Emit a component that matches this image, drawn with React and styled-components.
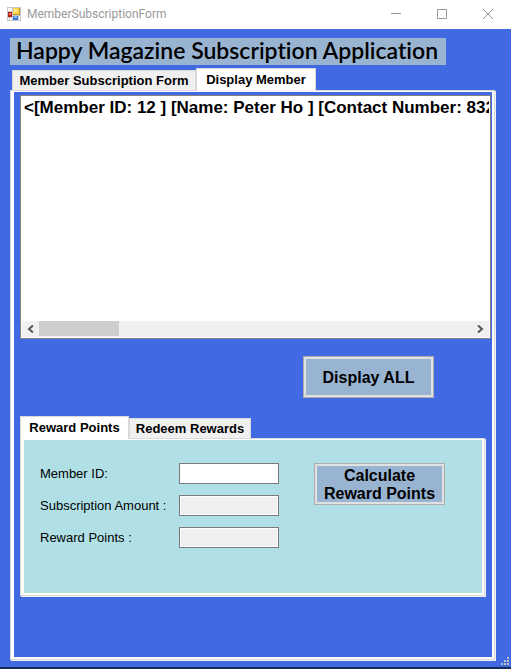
import React, { useState } from "react";
import styled, { createGlobalStyle } from "styled-components";

const GlobalStyle = createGlobalStyle`
  *, *::before, *::after { box-sizing: border-box; }
  body { margin: 0; background: #4169e1; color: #000; font-family: "Liberation Sans", Arial, sans-serif; }
  button, input { font: inherit; color: inherit; }
`;

const Window = styled.div`
  display: flex;
  flex-direction: column;
  min-height: 100vh;
  position: relative;
  background: #4169e1;
  border-bottom: 2px solid #132b55;
`;

const TitleBar = styled.header`
  display: flex;
  align-items: center;
  height: 29px;
  padding: 0 0 2px 7px;
  background: #fff;
`;

const WindowName = styled.span`
  flex: 1;
  padding-left: 6px;
  font: 12px/16px Roboto, sans-serif;
  color: #999;
  white-space: nowrap;
`;

const CaptionButton = styled.button`
  display: grid;
  place-items: center;
  width: 46px;
  height: 27px;
  padding: 0;
  border: 0;
  background: none;
`;

const Captions = styled.div`
  display: flex;
`;

const Client = styled.main`
  flex: 1;
  display: flex;
  flex-direction: column;
  align-items: flex-start;
  padding: 9px 15px 6px 10px;
`;

const Heading = styled.h1`
  margin: 0 0 3px;
  padding: 0 8px 2px 6px;
  background: #99b4d1;
  font: 600 23px/25px Lato, sans-serif;
  font-variant-ligatures: none;
  white-space: nowrap;
`;

const TabList = styled.div`
  display: flex;
  align-items: flex-end;
  padding-left: ${(p) => p.$indent}px;
`;

const Tab = styled.button`
  height: ${(p) => (p.$active ? 23 : 20)}px;
  margin-bottom: ${(p) => (p.$active ? -1 : 0)}px;
  width: ${(p) => p.$width}px;
  padding: 0;
  position: relative;
  border: 1px solid #d9d9d9;
  border-bottom: 0;
  background: ${(p) => (p.$active ? "#fff" : "#f0f0f0")};
  font: bold 13px/18px "Liberation Sans", Arial, sans-serif;
  white-space: nowrap;
`;

const Frame = styled.section`
  align-self: stretch;
  border: 1px solid #d9d9d9;
  background: #fff;
  box-shadow: 1px 1px 0 #f0f0f0;
  margin: 0 1px 1px 0;
  padding: 1px 2px 2px 3px;
  display: flex;
  flex: ${(p) => (p.$fill ? 1 : "none")};
`;

const MemberPage = styled.div`
  flex: 1;
  min-width: 0;
  display: flex;
  flex-direction: column;
  padding: 3px 1px 60px 6px;
  background: #4169e1;
`;

const ListBox = styled.div`
  height: 244px;
  display: flex;
  flex-direction: column;
  border: 1px solid #828282;
  padding: 1px;
  background: #fff;
`;

const MemberList = styled.ul`
  flex: 1;
  margin: 0;
  padding: 0 0 0 2px;
  list-style: none;
  overflow: hidden;
  font: bold 17px/22px "Liberation Sans", Arial, sans-serif;
  white-space: nowrap;
`;

const ScrollBar = styled.div`
  display: flex;
  align-items: stretch;
  height: 16px;
  background: #f0f0f0;
`;

const ScrollButton = styled.button`
  width: 17px;
  padding: 0;
  border: 0;
  background: none;
  display: grid;
  place-items: center;
`;

const Track = styled.div`
  flex: 1;
`;

const Thumb = styled.div`
  width: 80px;
  height: 15px;
  background: #cdcdcd;
`;

const ActionRow = styled.div`
  display: flex;
  justify-content: flex-end;
  padding: 17px 57px 18px 0;
`;

const ActionButton = styled.button`
  width: 131px;
  height: 42px;
  padding: 2px 0 0;
  border: 1px solid #adadad;
  box-shadow: inset 0 0 0 2px #e1e1e1;
  background: #99b4d1;
  font: bold 16px/18px "Liberation Sans", Arial, sans-serif;
`;

const Rewards = styled.div`
  margin-right: 5px;
`;

const RewardForm = styled.form`
  flex: 1;
  display: flex;
  justify-content: space-between;
  align-items: flex-start;
  height: 153px;
  padding: 23px 37px 0 16px;
  background: #b0e0e6;
`;

const Fields = styled.div`
  display: grid;
  grid-template-columns: 139px 100px;
  row-gap: 11px;
  align-items: center;
  font-size: 13px;
  line-height: 21px;
`;

const FieldLabel = styled.label`
  white-space: nowrap;
`;

const TextBox = styled.input`
  width: 100%;
  height: 21px;
  padding: 0 3px;
  border: 1px solid #7a7a7a;
  border-radius: 0;
  box-shadow: inset 0 0 0 1px #fff;
  background: ${(p) => (p.readOnly ? "#f0f0f0" : "#fff")};
`;

const Grip = styled.svg`
  position: absolute;
  right: 2px;
  bottom: 2px;
`;

function FormIcon() {
  return (
    <svg width="14" height="14" viewBox="0 0 14 14" shapeRendering="crispEdges" aria-hidden="true">
      <path fill="#c4c7cc" d="M0 0h14v14H0z" />
      <path fill="#fff" d="M1 1h4v3H1zM1 11h1v2H1zM3 11h2v2H3zM12 9h1v4h-1z" />
      <path fill="#b51d14" d="M1 5h4v5H1z" />
      <path fill="#ee7668" d="M2 6h2v2H2z" />
      <path fill="#c79518" d="M6 1h7v7H6z" />
      <path fill="#ffd34d" d="M6 1h6v6H6z" />
      <path fill="#ffe793" d="M7 2h3v3H7z" />
      <path fill="#3979df" d="M6 9h5v4H6z" />
      <path fill="#83b5fa" d="M7 9h3v2H7z" />
    </svg>
  );
}

function Chevron({ right }) {
  return (
    <svg width="7" height="8" viewBox="0 0 7 8" aria-hidden="true">
      <path d={right ? "M1 0.5 5 4 1 7.5" : "M6 0.5 2 4 6 7.5"} fill="none" stroke="#555" strokeWidth="2" />
    </svg>
  );
}

const captions = [
  ["Minimize", "M0 4.5h10"],
  ["Maximize", "M.5 .5h9v9h-9z"],
  ["Close", "M0 0 10 10M10 0 0 10"],
];

const members = ["<[Member ID: 12 ] [Name: Peter Ho ] [Contact Number: 832"];

export default function App() {
  const [memberId, setMemberId] = useState("");
  return (
    <>
      <GlobalStyle />
      <Window>
        <TitleBar>
          <FormIcon />
          <WindowName>MemberSubscriptionForm</WindowName>
          <Captions>
            {captions.map(([label, d]) => (
              <CaptionButton key={label} type="button" aria-label={label}>
                <svg width="10" height="10" viewBox="0 0 10 10" aria-hidden="true">
                  <path d={d} fill="none" stroke="#999" />
                </svg>
              </CaptionButton>
            ))}
          </Captions>
        </TitleBar>
        <Client>
          <Heading>Happy Magazine Subscription Application</Heading>
          <TabList role="tablist" $indent={2}>
            <Tab type="button" role="tab" aria-selected="false" $width={184}>Member Subscription Form</Tab>
            <Tab type="button" role="tab" aria-selected="true" $active $width={120}>Display Member</Tab>
          </TabList>
          <Frame $fill>
            <MemberPage>
              <ListBox>
                <MemberList aria-label="Members">
                  {members.map((member) => <li key={member}>{member}</li>)}
                </MemberList>
                <ScrollBar>
                  <ScrollButton type="button" aria-label="Scroll left"><Chevron /></ScrollButton>
                  <Track><Thumb /></Track>
                  <ScrollButton type="button" aria-label="Scroll right"><Chevron right /></ScrollButton>
                </ScrollBar>
              </ListBox>
              <ActionRow>
                <ActionButton type="button">Display ALL</ActionButton>
              </ActionRow>
              <Rewards>
                <TabList role="tablist" $indent={0}>
                  <Tab type="button" role="tab" aria-selected="true" $active $width={109}>Reward Points</Tab>
                  <Tab type="button" role="tab" aria-selected="false" $width={122}>Redeem Rewards</Tab>
                </TabList>
                <Frame>
                  <RewardForm onSubmit={(e) => e.preventDefault()}>
                    <Fields>
                      <FieldLabel htmlFor="member-id">Member ID:</FieldLabel>
                      <TextBox id="member-id" value={memberId} onChange={(e) => setMemberId(e.target.value)} />
                      <FieldLabel htmlFor="amount">Subscription Amount :</FieldLabel>
                      <TextBox id="amount" readOnly />
                      <FieldLabel htmlFor="points">Reward Points :</FieldLabel>
                      <TextBox id="points" readOnly />
                    </Fields>
                    <ActionButton type="submit">Calculate<br />Reward Points</ActionButton>
                  </RewardForm>
                </Frame>
              </Rewards>
            </MemberPage>
          </Frame>
        </Client>
        <Grip width="8" height="8" viewBox="0 0 8 8" shapeRendering="crispEdges" aria-hidden="true">
          <path fill="#c0c0c0" d="M6 0h2v2H6zM3 3h2v2H3zM6 3h2v2H6zM0 6h2v2H0zM3 6h2v2H3zM6 6h2v2H6z" />
        </Grip>
      </Window>
    </>
  );
}
